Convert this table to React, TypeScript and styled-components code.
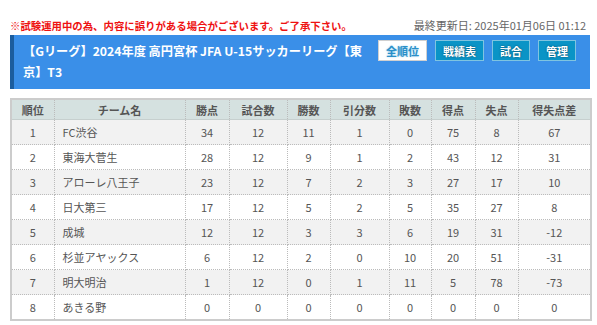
import React from 'react';
import styled, { createGlobalStyle } from 'styled-components';

const GlobalStyle = createGlobalStyle`
  html, body {
    margin: 0;
    padding: 0;
    background: #fff;
  }
  body {
    font-family: 'Noto Sans CJK JP', 'Noto Sans', sans-serif;
    color: #555;
  }
`;

const Page = styled.div`
  padding: 15px 7px 0 10px;
`;

const TopLine = styled.div`
  display: flex;
  justify-content: space-between;
  align-items: center;
  height: 20px;
`;

const Notice = styled.span`
  color: #ee1111;
  font-size: 10.4px;
  font-weight: 700;
`;

const Updated = styled.span`
  color: #666;
  font-size: 11px;
  margin-right: 4px;
`;

const Header = styled.div`
  display: flex;
  justify-content: space-between;
  align-items: flex-start;
  background: #3a8fe8;
  border-left: 4px solid #1b5d9e;
  padding: 6px 14px 6px 9px;
`;

const Title = styled.h1`
  flex: 1;
  margin: 0;
  color: #fff;
  font-size: 12.2px;
  font-weight: 700;
  line-height: 21px;
  line-break: anywhere;
  padding-right: 14px;
`;

const Buttons = styled.div`
  display: flex;
  gap: 8px;
  margin-top: -1px;
`;

const NavButton = styled.button<{ $active?: boolean }>`
  height: 21px;
  padding: 0 7px;
  border: 1px solid ${({ $active }) => ($active ? '#d0d0d0' : '#7fc4e0')};
  background: ${({ $active }) => ($active ? '#fff' : '#0a94c6')};
  color: ${({ $active }) => ($active ? '#2a8fc8' : '#fff')};
  font-family: inherit;
  font-size: 11px;
  font-weight: 700;
  text-shadow: ${({ $active }) => ($active ? '0 0 2px #9fd4f0' : '0 0 2px #04445e')};
  cursor: pointer;
`;

const Table = styled.table`
  margin-top: 9px;
  width: 580px;
  border-collapse: collapse;
  table-layout: fixed;
  border: 2px solid #ccc;
  font-size: 11px;
`;

const Th = styled.th`
  height: 19px;
  padding: 0;
  background: #d5e1e0;
  color: #555;
  font-weight: 700;
  text-align: center;
  border: 1px dotted #bbb;
  border-top: none;
  border-bottom: 1px solid #c6cfce;
`;

const Row = styled.tr<{ $odd: boolean }>`
  background: ${({ $odd }) => ($odd ? '#f2f2f2' : '#fff')};
`;

const Td = styled.td<{ $left?: boolean }>`
  height: 24px;
  padding: 0 ${({ $left }) => ($left ? '8px' : '0')};
  text-align: ${({ $left }) => ($left ? 'left' : 'center')};
  border: 1px dotted #bbb;
  color: #555;
`;

const widths = [43, 131, 44, 58, 43, 59, 42, 44, 43, 73];
const heads = ['順位', 'チーム名', '勝点', '試合数', '勝数', '引分数', '敗数', '得点', '失点', '得失点差'];

const rows: (string | number)[][] = [
  [1, 'FC渋谷', 34, 12, 11, 1, 0, 75, 8, 67],
  [2, '東海大菅生', 28, 12, 9, 1, 2, 43, 12, 31],
  [3, 'アローレ八王子', 23, 12, 7, 2, 3, 27, 17, 10],
  [4, '日大第三', 17, 12, 5, 2, 5, 35, 27, 8],
  [5, '成城', 12, 12, 3, 3, 6, 19, 31, -12],
  [6, '杉並アヤックス', 6, 12, 2, 0, 10, 20, 51, -31],
  [7, '明大明治', 1, 12, 0, 1, 11, 5, 78, -73],
  [8, 'あきる野', 0, 0, 0, 0, 0, 0, 0, 0],
];

export default function App() {
  return (
    <Page>
      <GlobalStyle />
      <TopLine>
        <Notice>※試験運用中の為、内容に誤りがある場合がございます。ご了承下さい。</Notice>
        <Updated>最終更新日: 2025年01月06日 01:12</Updated>
      </TopLine>
      <Header>
        <Title>【Gリーグ】2024年度 高円宮杯 JFA U-15サッカーリーグ【東京】T3</Title>
        <Buttons>
          <NavButton $active>全順位</NavButton>
          <NavButton>戦績表</NavButton>
          <NavButton>試合</NavButton>
          <NavButton>管理</NavButton>
        </Buttons>
      </Header>
      <Table>
        <colgroup>
          {widths.map((w, i) => (
            <col key={i} style={{ width: w }} />
          ))}
        </colgroup>
        <thead>
          <tr>
            {heads.map((h) => (
              <Th key={h}>{h}</Th>
            ))}
          </tr>
        </thead>
        <tbody>
          {rows.map((r, i) => (
            <Row key={i} $odd={i % 2 === 0}>
              {r.map((c, j) => (
                <Td key={j} $left={j === 1}>
                  {c}
                </Td>
              ))}
            </Row>
          ))}
        </tbody>
      </Table>
    </Page>
  );
}
